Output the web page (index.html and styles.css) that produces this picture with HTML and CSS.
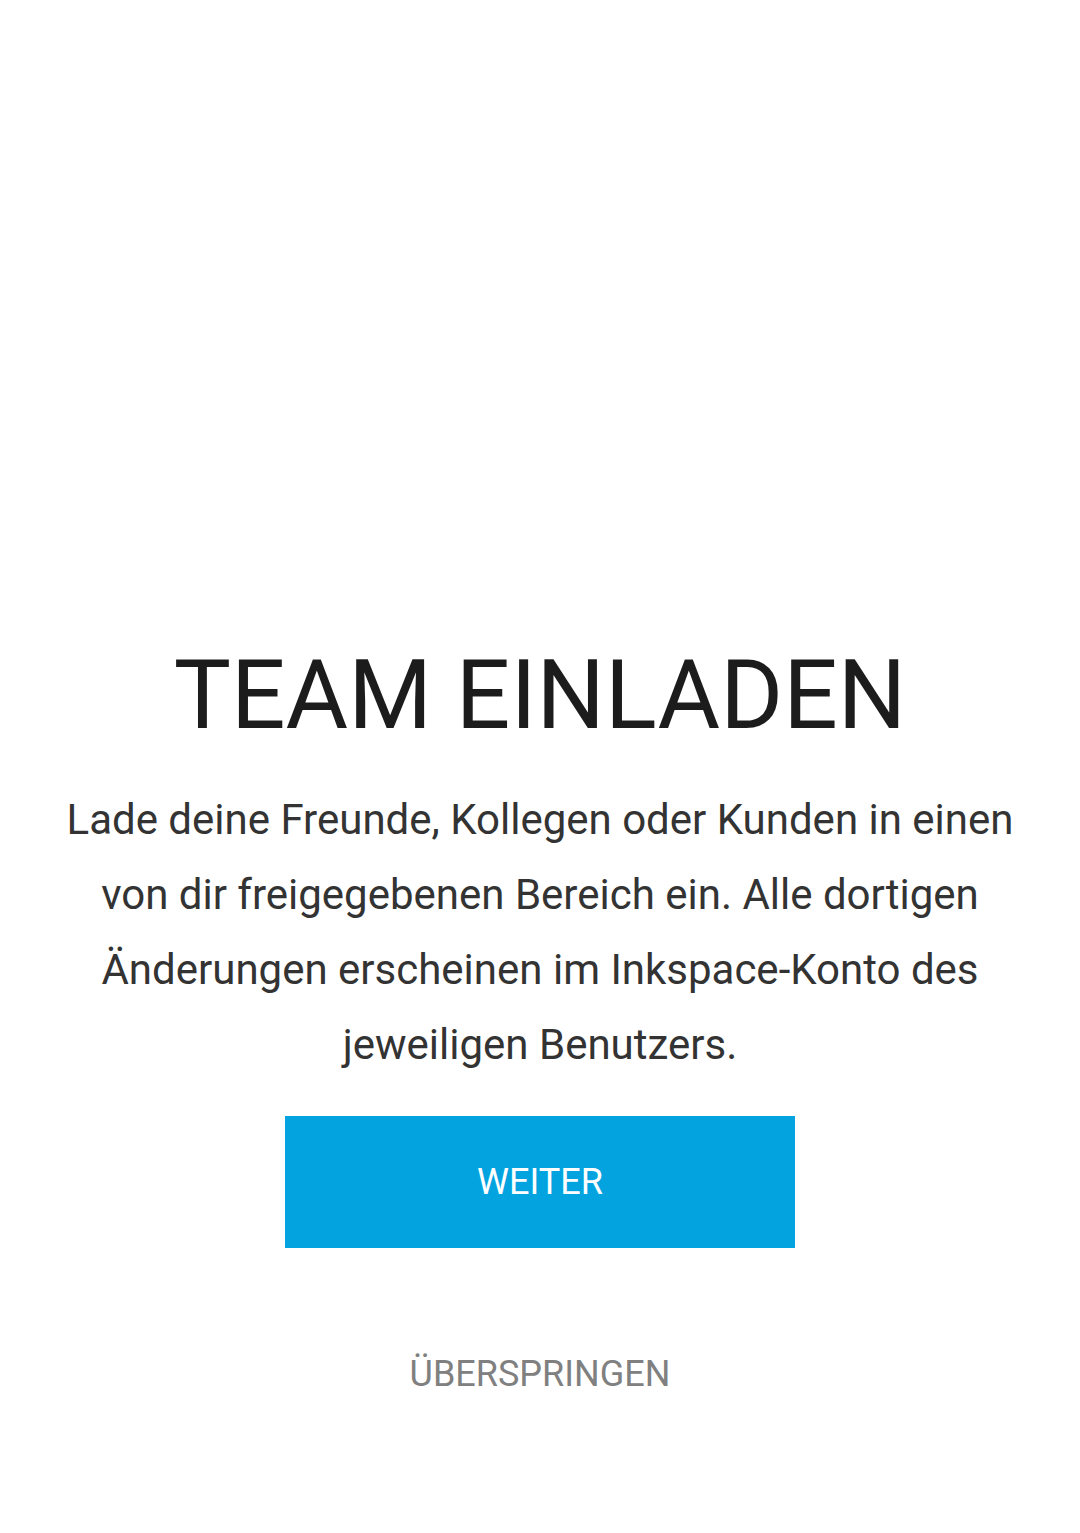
FILE: index.html
```html
<!DOCTYPE html>
<html lang="de">
<head>
<meta charset="utf-8">
<link rel="stylesheet" href="styles.css">
</head>
<body>
<main class="screen">
  <h1 class="title">TEAM EINLADEN</h1>
  <p class="desc">Lade deine Freunde, Kollegen oder Kunden in einen von dir freigegebenen Bereich ein. Alle dortigen Änderungen erscheinen im Inkspace-Konto des jeweiligen Benutzers.</p>
  <button class="primary">WEITER</button>
  <button class="skip">ÜBERSPRINGEN</button>
</main>
</body>
</html>
```

FILE: styles.css
```css
html, body {
  margin: 0;
  padding: 0;
  background: #ffffff;
}
body {
  font-family: Roboto, "Noto Sans", sans-serif;
  width: 1080px;
  height: 1533px;
  overflow: hidden;
}
.screen {
  display: flex;
  flex-direction: column;
  align-items: center;
  padding: 639px 40px 0;
}
.title {
  margin: 0;
  font-size: 96px;
  line-height: 112px;
  font-weight: 400;
  color: #1c1c1c;
  letter-spacing: 0;
}
.desc {
  margin: 31px 0 0;
  font-size: 42px;
  line-height: 75px;
  color: #333333;
  text-align: center;
  max-width: 1000px;
}
.primary {
  margin-top: 34px;
  width: 510px;
  height: 132px;
  border: none;
  background: #03a3e0;
  color: #ffffff;
  font-family: inherit;
  font-size: 36px;
  padding: 0;
}
.skip {
  margin-top: 105px;
  border: none;
  background: none;
  color: #808080;
  font-family: inherit;
  font-size: 36px;
  line-height: 43px;
  padding: 0;
}
```
